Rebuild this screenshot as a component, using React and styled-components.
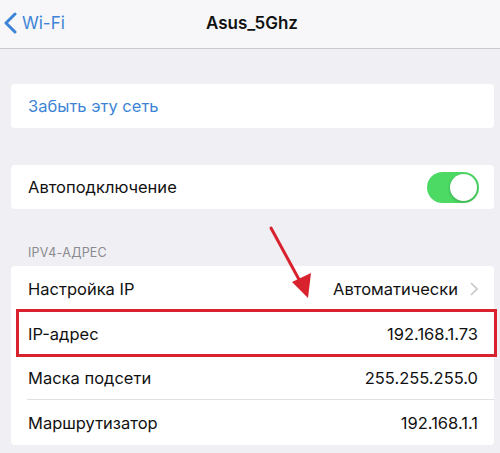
import React from "react";
import styled, { createGlobalStyle } from "styled-components";

const Global = createGlobalStyle`
  html, body { margin: 0; padding: 0; background: #efeff4; }
  body { font-family: Inter, "Noto Sans", Roboto, sans-serif; -webkit-font-smoothing: antialiased; }
`;

const Page = styled.div`
  position: relative;
  width: 500px;
  height: 453px;
  background: #efeff4;
  overflow: hidden;
`;

const NavBar = styled.div`
  position: relative;
  height: 48px;
  background: #f7f7f9;
  border-bottom: 1px solid #c9c9ce;
  display: flex;
  align-items: center;
  justify-content: center;
`;

const Back = styled.div`
  position: absolute;
  left: 4px;
  top: 0;
  height: 45px;
  display: flex;
  align-items: center;
  gap: 5px;
  color: #3d84d6;
  font-size: 17px;
`;

const Title = styled.div`
  font-weight: 600;
  font-size: 17px;
  color: #111;
  margin-top: -3px;
  margin-left: 4px;
`;

const Content = styled.div`
  padding: 35px 6px 0 11px;
  display: flex;
  flex-direction: column;
`;

const Card = styled.div`
  position: relative;
  background: #fff;
  border-radius: 4px;
  margin-bottom: ${(p) => p.$mb || 0}px;
`;

const Row = styled.div`
  position: relative;
  height: ${(p) => p.$h || 44}px;
  display: flex;
  align-items: center;
  justify-content: space-between;
  padding: 0 16px 0 17px;
  font-size: 16.5px;
  color: ${(p) => (p.$link ? "#3d84d6" : "#111")};
  ${(p) =>
    p.$sep &&
    `&::after { content: ""; position: absolute; left: 16px; right: 0; bottom: 0; height: 1px; background: #e1e1e5; }`}
  ${(p) =>
    p.$highlight &&
    `&::before { content: ""; position: absolute; left: 5px; right: -3px; top: -2px; bottom: -1px; border: 3px solid #d8222e; z-index: 2; }`}
`;

const Value = styled.span`
  display: flex;
  align-items: center;
  gap: 12px;
  color: #111;
`;

const SectionHeader = styled.div`
  font-size: 12.5px;
  color: #8a8a8f;
  padding: 0 0 6px 17px;
  letter-spacing: 0.2px;
`;

const Toggle = styled.div`
  width: 52px;
  height: 31px;
  border-radius: 16px;
  background: #4cd964;
  position: relative;
  margin-right: -1px;
  &::after {
    content: "";
    position: absolute;
    right: 2px;
    top: 2px;
    width: 27px;
    height: 27px;
    border-radius: 50%;
    background: #fff;
    box-shadow: 0 1px 3px rgba(0,0,0,0.25);
  }
`;

const Arrow = styled.svg`
  position: absolute;
  left: 0;
  top: 0;
  pointer-events: none;
  z-index: 3;
`;

export default function App() {
  return (
    <Page>
      <Global />
      <NavBar>
        <Back>
          <svg width="13" height="22" viewBox="0 0 13 22">
            <path d="M11 2 L2 11 L11 20" fill="none" stroke="#3d84d6" strokeWidth="3" strokeLinecap="round" strokeLinejoin="round" />
          </svg>
          <span>Wi-Fi</span>
        </Back>
        <Title>Asus_5Ghz</Title>
      </NavBar>
      <Content>
        <Card $mb={37}>
          <Row $link>Забыть эту сеть</Row>
        </Card>
        <Card $mb={36}>
          <Row>
            <span>Автоподключение</span>
            <Toggle />
          </Row>
        </Card>
        <SectionHeader>IPV4-АДРЕС</SectionHeader>
        <Card>
          <Row $h={45} $sep>
            <span>Настройка IP</span>
            <Value>
              Автоматически
              <svg width="8" height="14" viewBox="0 0 8 14">
                <path d="M1 1 L7 7 L1 13" fill="none" stroke="#c7c7cc" strokeWidth="1.6" />
              </svg>
            </Value>
          </Row>
          <Row $h={45} $highlight>
            <span>IP-адрес</span>
            <Value>192.168.1.73</Value>
          </Row>
          <Row $h={44} $sep>
            <span>Маска подсети</span>
            <Value>255.255.255.0</Value>
          </Row>
          <Row $h={45}>
            <span>Маршрутизатор</span>
            <Value>192.168.1.1</Value>
          </Row>
        </Card>
      </Content>
      <Arrow width="500" height="453" viewBox="0 0 500 453">
        <line x1="271" y1="228" x2="302" y2="285" stroke="#d8222e" strokeWidth="3" strokeLinecap="round" />
        <polygon points="308,298 292,282 311,273" fill="#d8222e" />
      </Arrow>
    </Page>
  );
}
